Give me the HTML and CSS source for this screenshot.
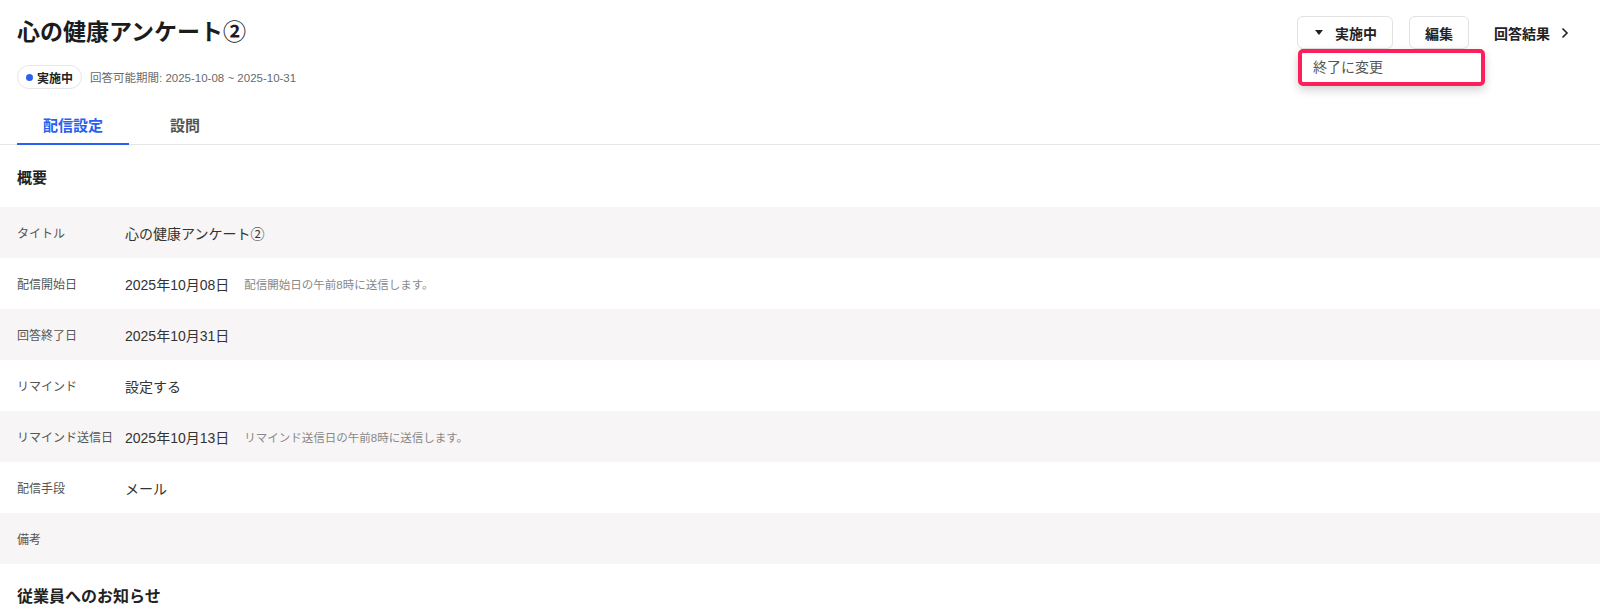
FILE: index.html
```html
<!DOCTYPE html>
<html lang="ja">
<head>
    <meta charset="UTF-8">
    <meta name="viewport" content="width=device-width, initial-scale=1.0">
    <title>心の健康アンケート②</title>
    <link rel="stylesheet" href="styles.css">
</head>
<body>
    <div class="page">
        <header class="page-header">
            <div class="heading">
                <h1 class="title">心の健康アンケート②</h1>
                <div class="meta">
                    <span class="status-badge"><span class="dot"></span>実施中</span>
                    <span class="period">回答可能期間: 2025-10-08 ~ 2025-10-31</span>
                </div>
            </div>
            <div class="actions">
                <div class="status-select">
                    <button class="btn status-btn">
                        <svg class="caret" width="8" height="5" viewBox="0 0 8 5"><path d="M0 0h8L4 5z" fill="#222"/></svg>
                        実施中
                    </button>
                    <div class="menu">
                        <div class="menu-item">終了に変更</div>
                    </div>
                </div>
                <button class="btn">編集</button>
                <a class="result-link" href="#">回答結果
                    <svg width="10" height="12" viewBox="0 0 10 12"><path d="M2.5 1.5l4.5 4.5-4.5 4.5" fill="none" stroke="#222" stroke-width="1.6"/></svg>
                </a>
            </div>
        </header>

        <nav class="tabs">
            <div class="tab active">配信設定</div>
            <div class="tab">設問</div>
        </nav>

        <section class="section">
            <h2 class="section-title">概要</h2>
            <div class="rows">
                <div class="row">
                    <div class="label">タイトル</div>
                    <div class="value">心の健康アンケート②</div>
                </div>
                <div class="row">
                    <div class="label">配信開始日</div>
                    <div class="value">2025年10月08日</div>
                    <div class="note">配信開始日の午前8時に送信します。</div>
                </div>
                <div class="row">
                    <div class="label">回答終了日</div>
                    <div class="value">2025年10月31日</div>
                </div>
                <div class="row">
                    <div class="label">リマインド</div>
                    <div class="value">設定する</div>
                </div>
                <div class="row">
                    <div class="label">リマインド送信日</div>
                    <div class="value">2025年10月13日</div>
                    <div class="note">リマインド送信日の午前8時に送信します。</div>
                </div>
                <div class="row">
                    <div class="label">配信手段</div>
                    <div class="value">メール</div>
                </div>
                <div class="row">
                    <div class="label">備考</div>
                    <div class="value"></div>
                </div>
            </div>
        </section>

        <section class="section">
            <h2 class="section-title large">従業員へのお知らせ</h2>
        </section>
    </div>
</body>
</html>
```

FILE: styles.css
```css
body, html {
    margin: 0;
    padding: 0;
    background: #fff;
    color: #222;
    font-family: "Liberation Sans", "Noto Sans CJK JP", sans-serif;
}

.page {
    width: 100%;
    overflow: hidden;
}

.page-header {
    display: flex;
    justify-content: space-between;
    align-items: flex-start;
    padding: 16px 16px 0 17px;
}

.title {
    margin: 0;
    font-size: 23px;
    line-height: 32px;
    font-weight: bold;
    color: #1c1c1c;
}

.meta {
    display: flex;
    align-items: center;
    gap: 8px;
    margin-top: 17px;
}

.status-badge {
    display: inline-flex;
    align-items: center;
    gap: 4px;
    height: 22px;
    padding: 0 8px;
    border: 1px solid #e6e6e6;
    border-radius: 12px;
    font-size: 12px;
    font-weight: bold;
    color: #222;
}

.dot {
    width: 7px;
    height: 7px;
    border-radius: 50%;
    background: #2a62f0;
}

.period {
    font-size: 11.5px;
    color: #6a6a6a;
}

.actions {
    display: flex;
    align-items: center;
    gap: 16px;
}

.btn {
    height: 33px;
    padding: 0 15px;
    border: 1px solid #e2e2e2;
    border-radius: 6px;
    background: #fff;
    font-family: inherit;
    font-size: 14px;
    font-weight: bold;
    color: #222;
    cursor: pointer;
}

.status-select {
    position: relative;
}

.status-btn {
    display: flex;
    align-items: center;
    gap: 12px;
    padding-left: 17px;
}

.menu {
    position: absolute;
    top: 33px;
    left: 1px;
    width: 179px;
    border: 4px solid #fb1f5c;
    border-radius: 5px;
    background: #fff;
    box-shadow: 0 4px 10px rgba(0, 0, 0, 0.18);
}

.menu-item {
    height: 29px;
    line-height: 29px;
    padding-left: 11px;
    font-size: 14px;
    color: #555;
}

.result-link {
    display: flex;
    align-items: center;
    gap: 10px;
    margin-left: 9px;
    padding-right: 14px;
    font-size: 14px;
    font-weight: bold;
    color: #222;
    text-decoration: none;
}

.tabs {
    display: flex;
    margin-top: 19px;
    padding-left: 17px;
    border-bottom: 1px solid #e6e6e6;
}

.tab {
    width: 112px;
    padding: 8px 0 7px;
    margin-bottom: -1px;
    border-bottom: 2px solid transparent;
    text-align: center;
    font-size: 15px;
    line-height: 20px;
    font-weight: bold;
    color: #555;
}

.tab.active {
    color: #2b5ef2;
    border-bottom-color: #2b5ef2;
}

.section-title {
    margin: 0;
    padding: 23px 17px 19px;
    font-size: 15px;
    line-height: 20px;
    font-weight: bold;
    color: #222;
}

.section-title.large {
    font-size: 16px;
}

.row {
    display: flex;
    align-items: center;
    height: 51px;
    padding: 0 17px;
}

.row:nth-child(odd) {
    background: #f7f5f5;
}

.label {
    width: 108px;
    flex-shrink: 0;
    font-size: 12px;
    color: #555;
}

.value {
    font-size: 14px;
    color: #333;
}

.note {
    margin-left: 15px;
    font-size: 11.5px;
    color: #888;
}
```
